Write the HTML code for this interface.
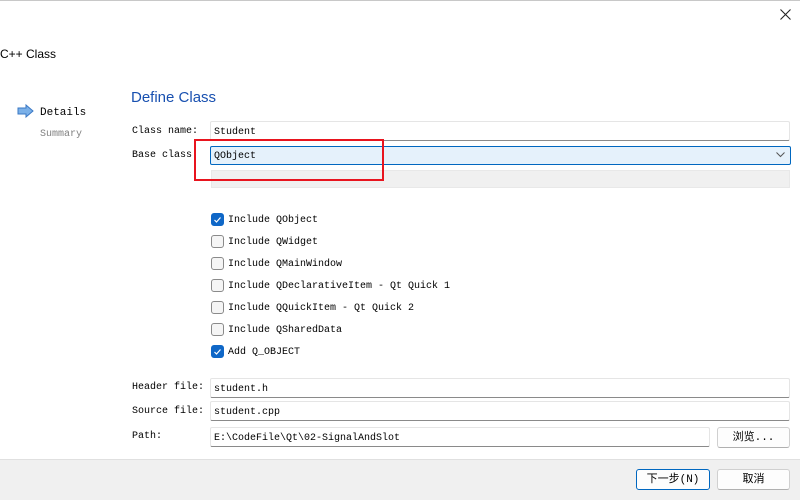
<!DOCTYPE html>
<html><head><meta charset="utf-8"><style>
*{margin:0;padding:0;box-sizing:border-box}
body{width:800px;height:500px;background:#fff;position:relative;overflow:hidden;font-family:"Liberation Mono","Noto Sans CJK SC",monospace;font-size:10px;color:#000}
.a{position:absolute}
.f{position:absolute;border:1px solid #e5e5e5;border-bottom:1px solid #8a8a8a;background:#fff;padding-left:3px;padding-top:2px;line-height:18px;border-radius:2px}
.cb{position:absolute;width:13px;height:13px;border:1px solid #8a8a8a;border-radius:3px;background:#f5f5f5}
.cb.on{background:#0f67c7;border-color:#0f67c7}
.lbl{position:absolute;left:228px;line-height:12px}
.btn{position:absolute;height:21px;border:1px solid #d0d0d0;border-bottom-color:#b0b0b0;border-radius:3px;background:#fdfdfd;text-align:center;line-height:20px;font-family:"Liberation Mono","Noto Sans CJK SC",monospace;font-size:11px}
</style></head><body>
<div class="a" style="left:0;top:0;width:800px;height:1px;background:#c8c8c8"></div>
<div class="a" style="left:0;top:47px;font-family:'Liberation Sans',sans-serif;font-size:12px">C++ Class</div>
<svg class="a" style="left:780px;top:9px" width="11" height="11"><path d="M0.5 0.5L10.5 10.5M10.5 0.5L0.5 10.5" stroke="#222" stroke-width="1.1"/></svg>
<svg class="a" style="left:17px;top:104px" width="18" height="14"><path d="M1 4h8V1l7 6-7 6V10H1z" fill="#7ab0e8" stroke="#3a78c5" stroke-width="1"/></svg>
<div class="a" style="left:40px;top:107px;font-size:11px">Details</div>
<div class="a" style="left:40px;top:129px;color:#808080;font-size:10px">Summary</div>
<div class="a" style="left:131px;top:89px;font-family:'Liberation Sans',sans-serif;font-size:15px;color:#1850b0">Define Class</div>
<div class="a" style="left:132px;top:126px">Class name:</div>
<div class="f" style="left:210px;top:121px;width:580px;height:20px">Student</div>
<div class="a" style="left:132px;top:150px">Base class</div>
<div class="f" style="left:210px;top:146px;width:581px;height:19px;background:#e5f1fb;border:1px solid #0067c0;line-height:16px">QObject</div>
<svg class="a" style="left:776px;top:152px" width="9" height="6"><path d="M0.5 0.5L4.5 4.5L8.5 0.5" fill="none" stroke="#555"/></svg>
<div class="a" style="left:211px;top:170px;width:579px;height:18px;background:#f0f0f0;border:1px solid #e8e8e8"></div>
<div class="a" style="left:194px;top:139px;width:190px;height:42px;border:2px solid #e8141e"></div>
<div class="cb on" style="left:211px;top:213px"><svg width="11" height="11"><path d="M2.5 6L4.5 8L8.5 3.5" fill="none" stroke="#fff" stroke-width="1.2"/></svg></div><div class="lbl" style="top:215px">Include QObject</div>
<div class="cb" style="left:211px;top:235px"></div><div class="lbl" style="top:237px">Include QWidget</div>
<div class="cb" style="left:211px;top:257px"></div><div class="lbl" style="top:259px">Include QMainWindow</div>
<div class="cb" style="left:211px;top:279px"></div><div class="lbl" style="top:281px">Include QDeclarativeItem - Qt Quick 1</div>
<div class="cb" style="left:211px;top:301px"></div><div class="lbl" style="top:303px">Include QQuickItem - Qt Quick 2</div>
<div class="cb" style="left:211px;top:323px"></div><div class="lbl" style="top:325px">Include QSharedData</div>
<div class="cb on" style="left:211px;top:345px"><svg width="11" height="11"><path d="M2.5 6L4.5 8L8.5 3.5" fill="none" stroke="#fff" stroke-width="1.2"/></svg></div><div class="lbl" style="top:347px">Add Q_OBJECT</div>
<div class="a" style="left:132px;top:382px">Header file:</div>
<div class="f" style="left:210px;top:378px;width:580px;height:20px">student.h</div>
<div class="a" style="left:132px;top:406px">Source file:</div>
<div class="f" style="left:210px;top:401px;width:580px;height:20px">student.cpp</div>
<div class="a" style="left:132px;top:431px">Path:</div>
<div class="f" style="left:210px;top:427px;width:500px;height:20px">E:\CodeFile\Qt\02-SignalAndSlot</div>
<div class="btn" style="left:717px;top:427px;width:73px">浏览...</div>
<div class="a" style="left:0;top:459px;width:800px;height:41px;background:#f0f0f0;border-top:1px solid #e0e0e0"></div>
<div class="btn" style="left:636px;top:469px;width:74px;border:1px solid #0067c0">下一步(N)</div>
<div class="btn" style="left:717px;top:469px;width:73px">取消</div>
</body></html>
